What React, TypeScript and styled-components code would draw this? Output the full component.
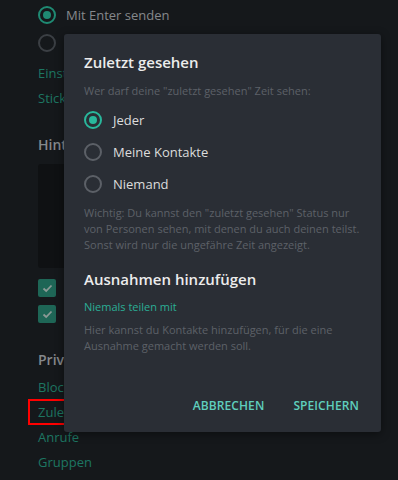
import React from "react";
import styled, { createGlobalStyle } from "styled-components";

const Global = createGlobalStyle`
  html, body { margin: 0; padding: 0; background: #15181b; }
  body { font-family: "Open Sans", "Noto Sans", sans-serif; -webkit-font-smoothing: antialiased; }
  * { box-sizing: border-box; }
`;

const Page = styled.div`
  position: relative;
  width: 398px;
  height: 480px;
  overflow: hidden;
  background: #15181b;
`;

const Settings = styled.div`
  padding: 1px 0 0 38px;
  display: flex;
  flex-direction: column;
`;

const BgRadioRow = styled.div`
  height: 28px;
  display: flex;
  align-items: center;
  gap: 10px;
  color: #85888c;
  font-size: 13px;
`;

const BgRadio = styled.span<{ $on?: boolean }>`
  width: 18px;
  height: 18px;
  border-radius: 50%;
  border: 2px solid ${(p) => (p.$on ? "#1f8a73" : "#3b3f44")};
  display: flex;
  align-items: center;
  justify-content: center;
  &::after {
    content: "";
    width: 8px;
    height: 8px;
    border-radius: 50%;
    background: ${(p) => (p.$on ? "#1f8a73" : "transparent")};
  }
`;

const BgLink = styled.div<{ $top?: number }>`
  height: 25px;
  line-height: 25px;
  margin-top: ${(p) => p.$top ?? 0}px;
  color: #1d7662;
  font-size: 13px;
  white-space: nowrap;
`;

const BgHeading = styled.div<{ $top: number }>`
  height: 24px;
  line-height: 24px;
  margin-top: ${(p) => p.$top}px;
  color: #85888c;
  font-size: 14px;
  font-weight: 600;
`;

const Wallpaper = styled.div`
  margin-top: 7px;
  width: 300px;
  height: 104px;
  border-radius: 3px;
  background: #0f1113;
`;

const CheckBox = styled.div<{ $top: number }>`
  margin-top: ${(p) => p.$top}px;
  width: 18px;
  height: 18px;
  border-radius: 2px;
  background: #1e6656;
  display: flex;
  align-items: center;
  justify-content: center;
`;

const Modal = styled.div`
  position: absolute;
  left: 64px;
  top: 34px;
  width: 317px;
  height: 398px;
  background: #2a2e35;
  border-radius: 3px;
  box-shadow: 0 2px 10px rgba(0, 0, 0, 0.45);
  padding: 18px 20px 0 20px;
  display: flex;
  flex-direction: column;
`;

const Title = styled.div<{ $top?: number }>`
  margin-top: ${(p) => p.$top ?? 0}px;
  font-size: 15px;
  line-height: 20px;
  font-weight: 600;
  color: #ececec;
`;

const Muted = styled.div<{ $top: number }>`
  margin-top: ${(p) => p.$top}px;
  font-size: 11px;
  line-height: 16px;
  color: #5d6168;
`;

const RadioList = styled.div`
  margin-top: 5px;
  display: flex;
  flex-direction: column;
`;

const RadioRow = styled.div`
  height: 32px;
  display: flex;
  align-items: center;
  gap: 11px;
  font-size: 13px;
  color: #dcdcdc;
`;

const Radio = styled.span<{ $on?: boolean }>`
  width: 18px;
  height: 18px;
  border-radius: 50%;
  border: 2px solid ${(p) => (p.$on ? "#29b79c" : "#5c6067")};
  display: flex;
  align-items: center;
  justify-content: center;
  &::after {
    content: "";
    width: 8px;
    height: 8px;
    border-radius: 50%;
    background: ${(p) => (p.$on ? "#29b79c" : "transparent")};
  }
`;

const Link = styled.div`
  margin-top: 9px;
  font-size: 11px;
  line-height: 18px;
  color: #2aae95;
`;

const Footer = styled.div`
  margin-top: auto;
  margin-right: 2px;
  margin-bottom: 9px;
  height: 36px;
  display: flex;
  justify-content: flex-end;
  align-items: center;
  gap: 29px;
`;

const Button = styled.button`
  background: none;
  border: none;
  padding: 0;
  font-family: inherit;
  font-size: 12px;
  font-weight: 600;
  letter-spacing: 0.1px;
  color: #5fcfbd;
  text-transform: uppercase;
  cursor: pointer;
`;

const Marker = styled.div`
  position: absolute;
  left: 28px;
  top: 399px;
  width: 53px;
  height: 26px;
  border: 2px solid #f00;
`;

const Check = () => (
  <svg width="11" height="9" viewBox="0 0 11 9">
    <path d="M1.5 4.5 L4.2 7 L9.5 1.5" fill="none" stroke="#8c9a96" strokeWidth="1.8" />
  </svg>
);

export default function App() {
  return (
    <Page>
      <Global />
      <Settings>
        <BgRadioRow>
          <BgRadio $on />
          Mit Enter senden
        </BgRadioRow>
        <BgRadioRow>
          <BgRadio />
          Mit Strg+Enter senden
        </BgRadioRow>
        <BgLink $top={4}>Einstellungen</BgLink>
        <BgLink>Sticker</BgLink>
        <BgHeading $top={22}>Hintergrund</BgHeading>
        <Wallpaper />
        <CheckBox $top={11}>
          <Check />
        </CheckBox>
        <CheckBox $top={8}>
          <Check />
        </CheckBox>
        <BgHeading $top={25}>Privatsphäre</BgHeading>
        <BgLink $top={3}>Blockiert</BgLink>
        <BgLink>Zuletzt gesehen</BgLink>
        <BgLink>Anrufe</BgLink>
        <BgLink>Gruppen</BgLink>
      </Settings>
      <Marker />
      <Modal>
        <Title>Zuletzt gesehen</Title>
        <Muted $top={11}>Wer darf deine "zuletzt gesehen" Zeit sehen:</Muted>
        <RadioList>
          <RadioRow>
            <Radio $on />
            Jeder
          </RadioRow>
          <RadioRow>
            <Radio />
            Meine Kontakte
          </RadioRow>
          <RadioRow>
            <Radio />
            Niemand
          </RadioRow>
        </RadioList>
        <Muted $top={5}>
          Wichtig: Du kannst den "zuletzt gesehen" Status nur von Personen sehen, mit denen du auch deinen teilst.
          Sonst wird nur die ungefähre Zeit angezeigt.
        </Muted>
        <Title $top={16}>Ausnahmen hinzufügen</Title>
        <Link>Niemals teilen mit</Link>
        <Muted $top={6}>Hier kannst du Kontakte hinzufügen, für die eine Ausnahme gemacht werden soll.</Muted>
        <Footer>
          <Button>Abbrechen</Button>
          <Button>Speichern</Button>
        </Footer>
      </Modal>
    </Page>
  );
}
